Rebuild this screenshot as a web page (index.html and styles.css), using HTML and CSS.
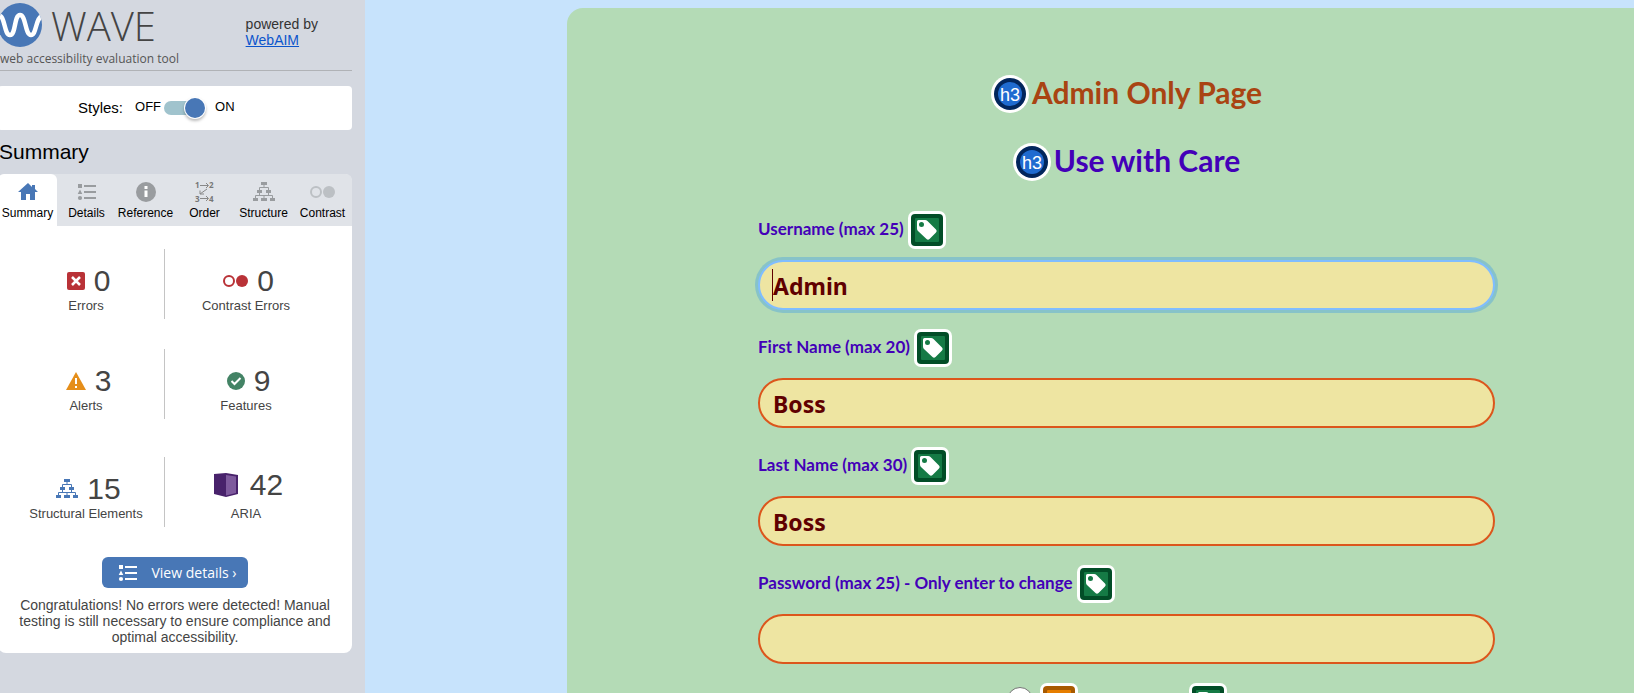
FILE: index.html
```html
<!DOCTYPE html>
<html lang="en">
<head>
<meta charset="utf-8">
<title>Admin Only Page</title>
<link rel="stylesheet" href="styles.css">
</head>
<body>
<svg class="sprites" aria-hidden="true">
  <symbol id="tag" viewBox="0 0 38 38">
    <rect width="38" height="38" rx="7" fill="#fff"/>
    <rect x="3" y="3" width="32" height="32" rx="4" fill="#024d27"/>
    <rect x="7" y="7" width="24" height="24" rx="1" fill="#157a45"/>
    <path fill="#fff" fill-rule="evenodd" d="M9 10.500Q9 9 10.500 9H17Q18.500 9 19.500 10L28 18.500Q29.500 20 28 21.500L21.500 28Q20 29.500 18.500 28L10 20Q9 19 9 17.500ZM13.500 11A2.500 2.500 0 1 0 13.500 16A2.500 2.500 0 1 0 13.500 11Z"/>
  </symbol>
  <symbol id="h3" viewBox="0 0 38 38">
    <circle cx="19" cy="19" r="19" fill="#fff"/>
    <circle cx="19" cy="19" r="16" fill="#02265c"/>
    <circle cx="19" cy="19" r="12" fill="#1f6bd0"/>
    <text x="19" y="26" text-anchor="middle" fill="#fff" font-size="18">h3</text>
  </symbol>
  <symbol id="list" viewBox="0 0 20 18">
    <path d="M1 1h4v4H1zM3 6.500L5.300 11H.7zM7 2h12v2H7zM7 8h12v2H7zM7 14h12v2H7z"/><circle cx="3" cy="15" r="2.100"/>
  </symbol>
  <symbol id="tree" viewBox="0 0 22 20">
    <path d="M8 0h6v3H8zM4 8h5v3H4zM13 8h5v3H13zM0 16h5v3H0zM8 16h6v3H8zM17 16h5v3H17z"/>
    <path fill="none" stroke="currentColor" d="M11 3v3M6.500 8V5.500h9V8M6.500 11v2.500M15.500 11v2.500M2.500 16v-2.500h17V16M11 13.500V16"/>
  </symbol>
</svg>
<div class="layout">
  <aside class="sidebar">
    <header class="brand">
      <div class="logo">
        <div class="logo-row">
          <svg class="logo-mark" viewBox="0 0 44 44" aria-hidden="true"><defs><clipPath id="disc"><circle cx="22" cy="22" r="22"/></clipPath></defs><circle cx="22" cy="22" r="22" fill="#4877b6"/><path clip-path="url(#disc)" d="M1 13C7 12 6 32 12 32S16 12 22 12S27 32 33 32S37 13 46 12" fill="none" stroke="#fff" stroke-width="4.500"/></svg>
          <span class="logo-name">WAVE</span>
        </div>
        <div class="tagline">web accessibility evaluation tool</div>
      </div>
      <div class="powered">powered by<br><a href="#">WebAIM</a></div>
    </header>
    <div class="styles-box">
      <span class="styles-label">Styles:</span>
      <label class="switch"><span>OFF</span><input type="checkbox" role="switch" checked aria-label="Styles"><span>ON</span></label>
    </div>
    <h2 class="section-title">Summary</h2>
    <section class="panel">
      <nav class="tabs">
        <button class="tab active"><svg viewBox="0 0 20 20"><path d="M10 1L0 10h3v8h5v-6h4v6h5v-8h3L17 7V3h-3v2z"/></svg>Summary</button>
        <button class="tab"><svg viewBox="0 0 20 18"><use href="#list"/></svg>Details</button>
        <button class="tab"><svg viewBox="0 0 20 20"><circle cx="10" cy="10" r="10"/><path fill="#fff" d="M8.500 4h3v3h-3zM8.500 8.500h3V15h-3z"/></svg>Reference</button>
        <button class="tab"><svg class="order" viewBox="0 0 20 20"><text x="0" y="6">1</text><text x="14" y="6">2</text><text x="0" y="20">3</text><text x="14" y="20">4</text><path fill="none" stroke="currentColor" d="M5 3.500h8M11 1l2.500 2.500L11 6M5 16.500h8M11 14l2.500 2.500L11 19M12 7l-7 5M5 8.500v3.500h4"/></svg>Order</button>
        <button class="tab"><svg class="wide" viewBox="0 0 22 20"><use href="#tree"/></svg>Structure</button>
        <button class="tab faded"><svg class="wider" viewBox="0 0 25 20"><circle cx="6" cy="10" r="5" fill="none" stroke="currentColor" stroke-width="2"/><circle cx="19" cy="10" r="6"/></svg><span>Contrast</span></button>
      </nav>
      <div class="stats">
        <div class="stat"><div class="count"><svg class="i18" viewBox="0 0 18 18"><rect width="18" height="18" rx="2" fill="#b93237"/><path d="M5 5l8 8M13 5l-8 8" stroke="#fff" stroke-width="2.500"/></svg>0</div>Errors</div>
        <div class="stat"><div class="count"><svg class="i25" viewBox="0 0 25 18"><circle cx="6" cy="9" r="5" fill="none" stroke="#b93237" stroke-width="2"/><circle cx="19" cy="9" r="6" fill="#b93237"/></svg>0</div>Contrast Errors</div>
        <div class="stat"><div class="count"><svg class="i20" viewBox="0 0 20 18"><path d="M10 0l10 18H0z" fill="#e58e1a"/><path d="M9 6h2v6H9zM9 14h2v2H9z" fill="#fff"/></svg>3</div>Alerts</div>
        <div class="stat"><div class="count"><svg class="i18" viewBox="0 0 18 18"><circle cx="9" cy="9" r="9" fill="#438365"/><path d="M4.500 9l3 3 6-6" fill="none" stroke="#fff" stroke-width="2"/></svg>9</div>Features</div>
        <div class="stat last"><div class="count"><svg class="i22 blue" viewBox="0 0 22 20"><use href="#tree"/></svg>15</div>Structural Elements</div>
        <div class="stat last"><div class="count high"><svg class="i24" viewBox="0 0 24 24"><path d="M0 1L12 0l12 2v19l-12 3-12-3z" fill="#48226b"/><path d="M12 2l10 1.500V20l-10 2.500z" fill="#7e5a9d"/></svg>42</div>ARIA</div>
      </div>
      <button class="details-btn"><svg viewBox="0 0 20 18" aria-hidden="true"><use href="#list"/></svg>View details ›</button>
      <p class="note">Congratulations! No errors were detected! Manual testing is still necessary to ensure compliance and optimal accessibility.</p>
    </section>
  </aside>
  <main class="page">
    <div class="card">
      <h3 class="title rust"><svg viewBox="0 0 38 38" aria-hidden="true"><use href="#h3"/></svg>Admin Only Page</h3>
      <h3 class="title"><svg viewBox="0 0 38 38" aria-hidden="true"><use href="#h3"/></svg>Use with Care</h3>
      <form class="form">
        <div class="field"><label for="user">Username (max 25)<svg viewBox="0 0 38 38" aria-hidden="true"><use href="#tag"/></svg></label><div class="entry focused"><input id="user" type="text" value="Admin"></div></div>
        <div class="field"><label for="first">First Name (max 20)<svg viewBox="0 0 38 38" aria-hidden="true"><use href="#tag"/></svg></label><div class="entry"><input id="first" type="text" value="Boss"></div></div>
        <div class="field"><label for="last">Last Name (max 30)<svg viewBox="0 0 38 38" aria-hidden="true"><use href="#tag"/></svg></label><div class="entry"><input id="last" type="text" value="Boss"></div></div>
        <div class="field"><label for="pass">Password (max 25) - Only enter to change<svg viewBox="0 0 38 38" aria-hidden="true"><use href="#tag"/></svg></label><div class="entry"><input id="pass" type="password"></div></div>
        <div class="choices">
          <input class="radio" type="radio" aria-label="Option">
          <svg viewBox="0 0 38 38" aria-hidden="true"><rect width="38" height="38" rx="7" fill="#fff"/><rect x="3" y="3" width="32" height="32" rx="4" fill="#a85a00"/><rect x="7" y="7" width="24" height="24" rx="1" fill="#e67e00"/></svg>
          <svg class="apart" viewBox="0 0 38 38" aria-hidden="true"><use href="#tag"/></svg>
        </div>
      </form>
    </div>
  </main>
</div>
</body>
</html>
```
FILE: styles.css
```css
* { box-sizing: border-box; }
body { margin: 0; background: #c7e3fc; font-family: "Liberation Sans", Arial, sans-serif; }
button { font: inherit; border: 0; padding: 0; }
.sprites { position: absolute; width: 0; height: 0; }
.layout { display: flex; height: 100vh; overflow: hidden; }

.sidebar { flex: 0 0 367px; margin-left: -2px; padding: 0 13px 0 0; background: #d4d8e0; color: #333; font-size: 14px; line-height: 16px; }
.brand { display: flex; justify-content: space-between; padding-right: 34px; border-bottom: 1px solid #b0b2b6; }
.logo-row { display: flex; align-items: center; height: 50px; gap: 9px; }
.logo-mark { width: 44px; height: 44px; }
.logo-name { padding-top: 2px; font: 300 40px/48px "Open Sans", sans-serif; color: #444; }
.tagline { padding: 0 0 2px 2px; font: 12px/18px "Open Sans", sans-serif; color: #555; }
.powered { padding-top: 16px; }
.powered a { color: #0b55cc; }
.styles-box { display: flex; align-items: center; gap: 12px; height: 44px; margin-top: 15px; padding-left: 80px; background: #fff; border-radius: 4px; color: #000; }
.styles-label { font-size: 15px; }
.switch { display: flex; align-items: center; gap: 3px; font-size: 13px; }
.switch span { padding-bottom: 2px; }
.switch input { appearance: none; position: relative; width: 38px; height: 14px; margin: 0 10px 0 0; border-radius: 7px; background: #a0c3cd; }
.switch input::after { content: ""; position: absolute; right: -3px; top: -3px; width: 20px; height: 20px; border-radius: 50%; background: #4877b6; box-shadow: 0 0 0 1px #fff, 0 2px 3px 1px #0004; }
.section-title { margin: 10px 0; padding-left: 1px; font-size: 21px; line-height: 24px; font-weight: 400; color: #000; }

.panel { display: flex; flex-direction: column; align-items: center; background: #fff; border-radius: 8px; padding-bottom: 8px; color: #444; }
.tabs { display: grid; grid-template-columns: repeat(6, 1fr); width: 100%; background: #e0e3e8; border-radius: 6px 6px 0 0; }
.tab { display: flex; flex-direction: column; align-items: center; gap: 4px; height: 52px; padding-top: 8px; background: none; color: #000; font-size: 12px; line-height: 14px; }
.tab svg { width: 20px; height: 20px; overflow: visible; fill: #999c9f; color: #999c9f; }
.tab .wide { width: 22px; }
.tab .wider { width: 25px; }
.tab .order { font: 700 8px "Open Sans", sans-serif; fill: #777; color: #888; }
.tab.faded svg { fill: #bcc0c4; color: #bcc0c4; }
.tab.active { background: #fff; border-radius: 6px 6px 0 0; }
.tab.active svg { fill: #4877b6; }

.stats { display: grid; grid-template-columns: 157px 162px; width: 100%; padding: 23px 0 0 10px; row-gap: 30px; }
.stat { height: 70px; padding-top: 15px; text-align: center; font-size: 13px; line-height: 16px; }
.stat:nth-child(odd) { border-right: 1px solid #c4c4c4; }
.stat.last { margin-top: 8px; }
.count { display: flex; justify-content: center; align-items: center; gap: 9px; height: 34px; padding-left: 5px; font-size: 30px; line-height: 34px; color: #444; }
.count.high { padding-bottom: 8px; gap: 12px; }
.i18 { width: 18px; height: 18px; }
.i20 { width: 20px; height: 18px; }
.i22 { width: 22px; height: 20px; }
.i24 { width: 24px; height: 24px; }
.i25 { width: 25px; height: 18px; }
.blue { fill: #4877b6; color: #4877b6; }
.details-btn { display: flex; align-items: center; gap: 13px; height: 31px; margin-top: 30px; padding: 0 11px 0 16px; border-radius: 6px; background: #4877b6; color: #fff; font: 14px/20px "Open Sans", sans-serif; }
.details-btn svg { width: 20px; height: 18px; fill: #fff; }
.note { margin: 9px 18px 0; text-align: center; }

.page { flex: 1; padding: 8px 0 0 202px; }
.card { display: flow-root; height: 100%; min-height: 685px; padding: 67px 139px 0 191px; border-radius: 16px 0 0 0; background: #b4dbb6; color: #4300b8; font-family: Lato, sans-serif; }
.title { display: flex; justify-content: center; align-items: flex-start; gap: 3px; height: 38px; margin: 0 0 30px; font-size: 30px; line-height: 34px; font-weight: 700; }
.title svg { width: 38px; height: 38px; font-family: "Liberation Sans", sans-serif; font-weight: 400; }
.rust { color: #a94412; }
.form { display: grid; row-gap: 19px; }
.field label { display: flex; align-items: flex-start; gap: 4px; height: 38px; margin-bottom: 11px; font-size: 17px; line-height: 36px; font-weight: 700; }
.field svg, .choices svg { width: 38px; height: 38px; }
.entry { position: relative; }
.entry input { display: block; width: 100%; height: 50px; padding: 2px 13px 0; border: 2px solid #dc561c; border-radius: 25px; outline: 0; background: #eee5a2; color: #600000; font: 700 23px "Noto Sans", sans-serif; }
.focused input { border-color: #80bdff; box-shadow: 0 0 0 3px #007bff40; }
.focused::before { content: ""; position: absolute; left: 14px; top: 9px; width: 1px; height: 32px; background: #600000; }
.choices { display: flex; justify-content: center; align-items: flex-start; gap: 7px; padding-right: 20px; }
.radio { appearance: none; width: 26px; height: 26px; margin: 4px 0 0; border: 1px solid #767676; border-radius: 50%; background: #fff; }
.apart { margin-left: 104px; }
```
